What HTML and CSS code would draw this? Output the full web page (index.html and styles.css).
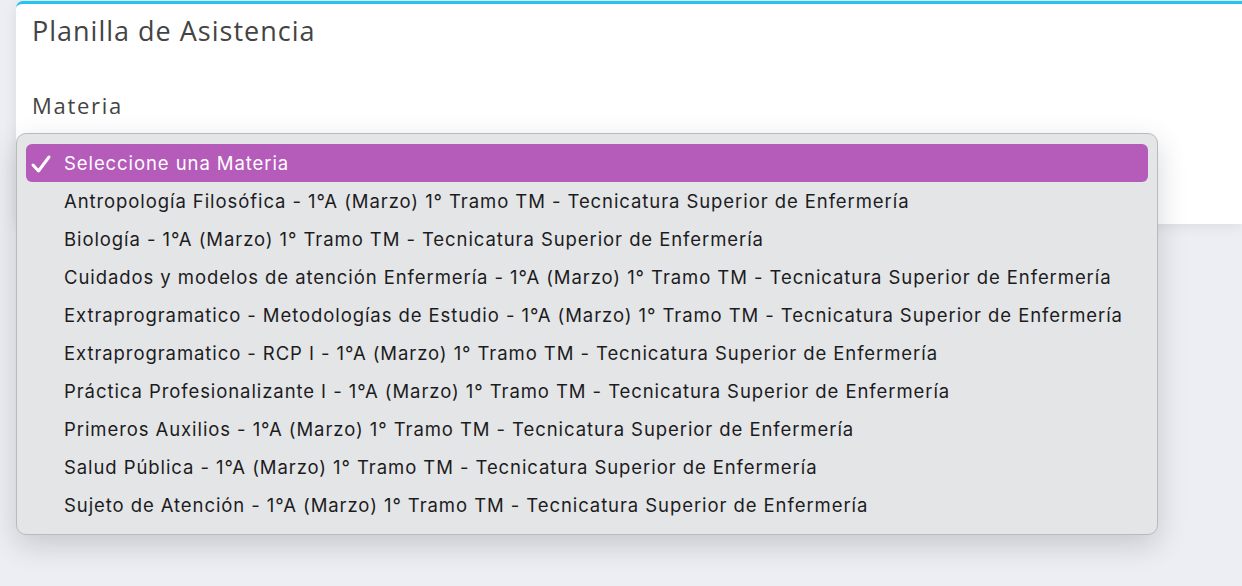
FILE: index.html
```html
<!DOCTYPE html>
<html lang="es">
<head>
<meta charset="utf-8">
<title>Planilla de Asistencia</title>
<link rel="stylesheet" href="styles.css">
</head>
<body>
<div class="page">
  <section class="card">
    <h1 class="title">Planilla de Asistencia</h1>
    <label class="label">Materia</label>
  </section>
  <div class="menu">
    <div class="opt selected">
      <svg class="check" width="22" height="20" viewBox="0 0 22 20"><polyline points="3,11 8.5,17 19,3" fill="none" stroke="#fff" stroke-width="3" stroke-linecap="round" stroke-linejoin="round"/></svg>
      <span>Seleccione una Materia</span>
    </div>
    <div class="opt"><span>Antropología Filosófica - 1°A (Marzo) 1° Tramo TM - Tecnicatura Superior de Enfermería</span></div>
    <div class="opt"><span>Biología - 1°A (Marzo) 1° Tramo TM - Tecnicatura Superior de Enfermería</span></div>
    <div class="opt"><span>Cuidados y modelos de atención Enfermería - 1°A (Marzo) 1° Tramo TM - Tecnicatura Superior de Enfermería</span></div>
    <div class="opt"><span>Extraprogramatico - Metodologías de Estudio - 1°A (Marzo) 1° Tramo TM - Tecnicatura Superior de Enfermería</span></div>
    <div class="opt"><span>Extraprogramatico - RCP I - 1°A (Marzo) 1° Tramo TM - Tecnicatura Superior de Enfermería</span></div>
    <div class="opt"><span>Práctica Profesionalizante I - 1°A (Marzo) 1° Tramo TM - Tecnicatura Superior de Enfermería</span></div>
    <div class="opt"><span>Primeros Auxilios - 1°A (Marzo) 1° Tramo TM - Tecnicatura Superior de Enfermería</span></div>
    <div class="opt"><span>Salud Pública - 1°A (Marzo) 1° Tramo TM - Tecnicatura Superior de Enfermería</span></div>
    <div class="opt"><span>Sujeto de Atención - 1°A (Marzo) 1° Tramo TM - Tecnicatura Superior de Enfermería</span></div>
  </div>
</div>
</body>
</html>
```

FILE: styles.css
```css
html, body {
  margin: 0;
  padding: 0;
  height: 100%;
}
body {
  background: #eceef3;
  overflow: hidden;
}
.page {
  position: relative;
  padding: 1px 0 0 16px;
}
.card {
  background: #fff;
  border-top: 3px solid #22c4f0;
  border-top-left-radius: 7px;
  height: 223px;
  box-sizing: border-box;
  padding: 10px 0 0 16px;
  box-shadow: 0 2px 14px rgba(0,0,0,0.08);
  font-family: "Open Sans", sans-serif;
  color: #444;
}
.title {
  margin: 0;
  font-size: 27px;
  font-weight: 400;
  line-height: 34px;
  letter-spacing: 1px;
}
.label {
  display: block;
  margin-top: 42px;
  font-size: 22px;
  line-height: 30px;
  letter-spacing: 1.7px;
}
.menu {
  position: absolute;
  left: 16px;
  top: 133px;
  width: 1142px;
  box-sizing: border-box;
  padding: 10px 9px 10px 9px;
  background: #e4e5e7;
  border: 1px solid #b9babc;
  border-radius: 10px;
  box-shadow: 0 10px 30px rgba(0,0,0,0.16);
  font-family: Inter, "Liberation Sans", sans-serif;
}
.opt {
  height: 38px;
  display: flex;
  align-items: center;
  padding-left: 38px;
  font-size: 18.5px;
  color: #1c1c1e;
  letter-spacing: 0.92px;
  position: relative;
}
.opt.selected {
  background: #b55bb9;
  color: #fff;
  border-radius: 6px;
}
.check {
  position: absolute;
  left: 4px;
  top: 10px;
}
```
